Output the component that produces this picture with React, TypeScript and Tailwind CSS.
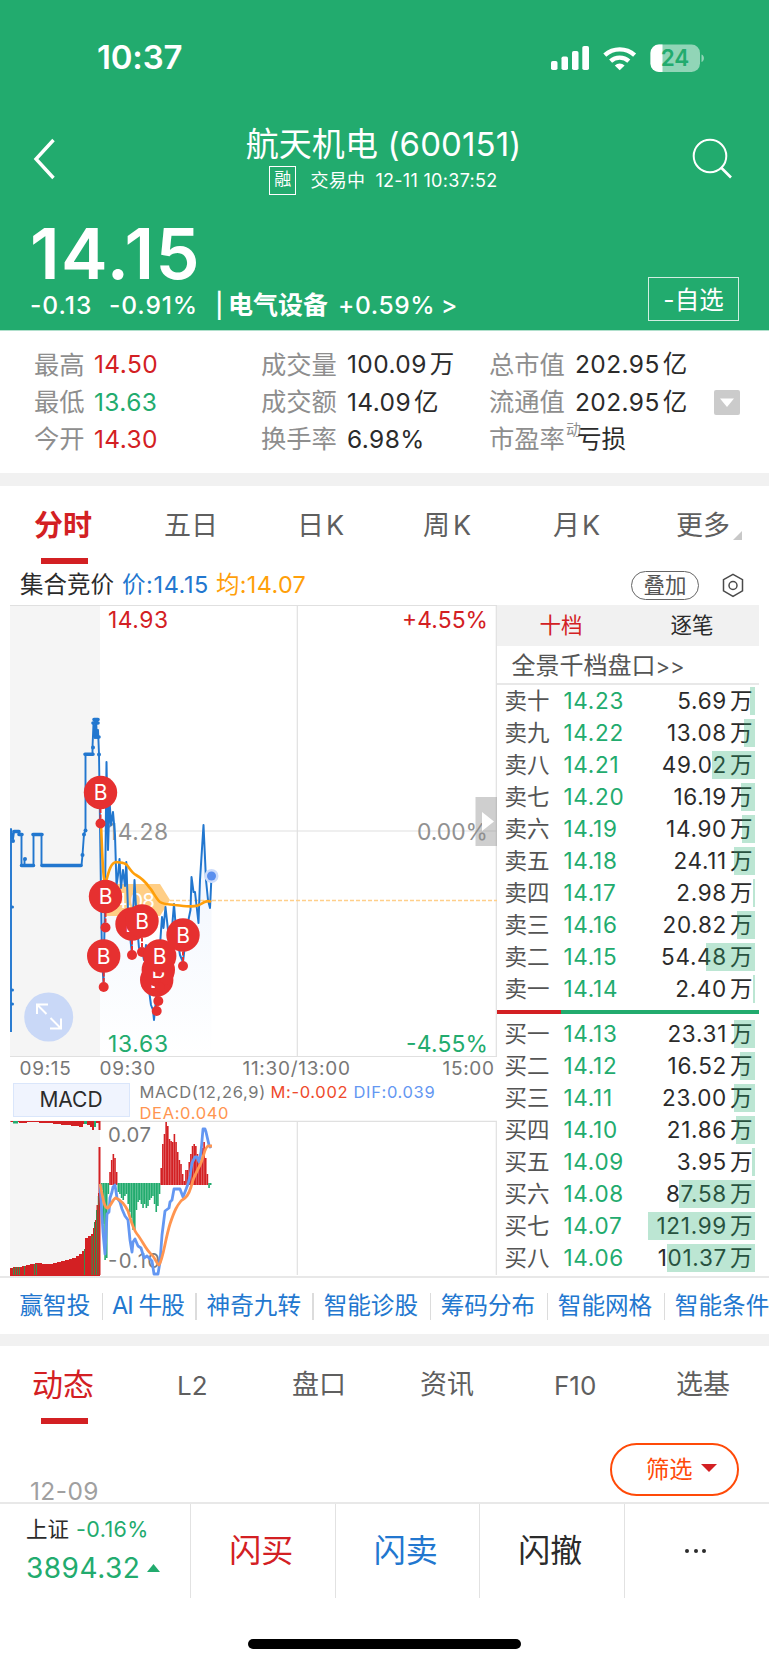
import React from 'react';
import clsx from 'clsx';

interface Level {
  label: string;
  price: string;
  volume: string;
  bar: number;
}

const asks: Level[] = [
  { label: '卖十', price: '14.23', volume: '5.69', bar: 5 },
  { label: '卖九', price: '14.22', volume: '13.08', bar: 11 },
  { label: '卖八', price: '14.21', volume: '49.02', bar: 43 },
  { label: '卖七', price: '14.20', volume: '16.19', bar: 14 },
  { label: '卖六', price: '14.19', volume: '14.90', bar: 13 },
  { label: '卖五', price: '14.18', volume: '24.11', bar: 21 },
  { label: '卖四', price: '14.17', volume: '2.98', bar: 2 },
  { label: '卖三', price: '14.16', volume: '20.82', bar: 18 },
  { label: '卖二', price: '14.15', volume: '54.48', bar: 49 },
  { label: '卖一', price: '14.14', volume: '2.40', bar: 2 },
];

const bids: Level[] = [
  { label: '买一', price: '14.13', volume: '23.31', bar: 21 },
  { label: '买二', price: '14.12', volume: '16.52', bar: 15 },
  { label: '买三', price: '14.11', volume: '23.00', bar: 21 },
  { label: '买四', price: '14.10', volume: '21.86', bar: 19 },
  { label: '买五', price: '14.09', volume: '3.95', bar: 3 },
  { label: '买六', price: '14.08', volume: '87.58', bar: 76 },
  { label: '买七', price: '14.07', volume: '121.99', bar: 107 },
  { label: '买八', price: '14.06', volume: '101.37', bar: 88 },
];

const auctionLine =
  'M11 1032V829L13 839L14 832L16 831L18 832L20 834H21.5V865.5H24.5V859V865.5H33.5V834H41.5V865.5H81.5L82.5 855L84 834L85.5 830V754H92.5V747L93.5 723L95 738L96 719L97 738L98 730L99 754L100 824';

const priceLine =
  'M100 824L102 960L103.5 982L105 900L106.5 762L108 850L109.5 800L111 825L113 812L115 835L116.5 885L118 875L119.5 859L121 888L123 870L125 886L126.3 862L128 910L130 935L131.5 950L134.5 880L137 925L139 948L142 950L144 960L146 945L149 990L151 1005L153 1010L154 1020L156 1000L158 980L160 945L162 917L163.5 928L165.5 907L168 930L171 940L174 904L176 930L180 955L183 962L185 945L188 922L190.5 910L191.5 877L193.5 892L195 892L198.5 923L200 880L203.5 825L206 880L208 900L210 908L211.5 876';

const averageLine =
  'M101 824C102 845 103 890 106 882C109 870 111 863 116 862C121 863 124 862 127 865C130 869 132 873 136 875C143 879 147 884 149 887C153 891 156 899 160 902C165 905 170 904 175 905C185 906 195 908 201 904C205 901 208 900 211 902';

const markers = [
  { x: 100.5, y: 792.5 },
  { x: 105.5, y: 896.5 },
  { x: 103.7, y: 956 },
  { x: 132, y: 924 },
  { x: 142, y: 921 },
  { x: 156.7, y: 980 },
  { x: 158.3, y: 970 },
  { x: 159.7, y: 956 },
  { x: 183, y: 935 },
];

// one histogram bar per minute, starting right at the open
const macdBars = [
  -6, -40, -76, -74, -10, 12, 24, 30, 26, 12,
  -8, -10, -14, -16, -12, -10, -20, -28, -34, -46,
  -46, -26, -18, -16, -20, -24, -20, -24, -22, -16,
  -14, -12, -20, -28, -22, -10, 16, 40, 50,
  62, 58, 45, 43, 42, 50, 42, 32, 24, 20,
  10, 3, 14, 14, 22, 30, 38, 40, 38, 30,
  26, 22, 36, 42, 26, 10, -4, -1,
];

const difLine =
  'M100 1184L103 1232L105 1254L106 1235L107 1214L109 1212L110 1198L112 1192L113 1187L115 1185L117 1198L120 1202L122 1209L125 1216L128 1220L130 1240L132 1252L133 1242L135 1239L138 1246L141 1248L144 1258L147 1256L152 1261L154 1274H158L160 1262L162 1235L165 1211L169 1208L170 1202L172 1200L174 1189L180 1189L183 1197L185 1192L188 1184L190 1176L192 1163L195 1157L197 1157L199 1162L201 1152L203 1129H205L206 1132L209 1145L211 1148';

const deaLine =
  'M100 1184C103 1197 104 1209 108 1208C111 1206 113 1198 116 1198C121 1200 125 1205 128 1211C132 1224 133 1229 137 1234C142 1240 146 1250 151 1254C155 1257 157 1265 159 1265C163 1260 165 1240 170 1224C175 1209 177 1206 181 1201C185 1198 188 1197 191 1187C194 1174 198 1170 201 1163C204 1155 205 1147 208 1146H212';

function StatusBar() {
  return (
    <div className="flex h-[115px] items-center pl-[97px]">
      <span className="w-[454px] pt-px text-[33px] font-semibold tracking-[-0.2px]">10:37</span>
      <svg width="156" height="30" viewBox="551 42 156 30">
        <g fill="#fff">
          <rect x="551" y="60" width="6.5" height="9" rx="1.8" />
          <rect x="561.5" y="55.5" width="6.5" height="13.5" rx="1.8" />
          <rect x="572" y="50" width="6.5" height="19" rx="1.8" />
          <rect x="582.3" y="45" width="6.7" height="24" rx="1.8" />
          <path d="M619.7 69.3l-4.9-4.9a7.2 7.2 0 0 1 9.8 0z" />
        </g>
        <g fill="none" stroke="#fff" strokeWidth="4.4">
          <path d="M604.8 54.2a22 22 0 0 1 29.8 0" />
          <path d="M610.6 60.2a13.4 13.4 0 0 1 18.2 0" />
        </g>
        <rect x="650.5" y="43.5" width="49.5" height="27.5" rx="8.5" fill="#fff" fillOpacity="0.5" />
        <path d="M662.5 43.5H659a8.5 8.5 0 0 0-8.5 8.5v10.5a8.5 8.5 0 0 0 8.5 8.5h3.5z" fill="#fff" />
        <path d="M701.5 53.5c3.2 1 3.2 6.5 0 7.5z" fill="#fff" fillOpacity="0.5" />
        <text x="675" y="65" textAnchor="middle" fontSize="22.5" fontWeight="600" fill="#22ab6e">24</text>
      </svg>
    </div>
  );
}

function Header() {
  return (
    <header className="h-[331px] border-b border-[#b0e0cc] bg-[#22ab6e] text-white">
      <StatusBar />
      <div className="flex h-[89px] pl-[33px]">
        <svg className="mt-[23px]" width="24" height="42" viewBox="0 0 24 42" fill="none" stroke="#fff" strokeWidth="3.4">
          <path d="M20.5 2L3 21l17.5 19" />
        </svg>
        <div className="flex w-[635px] flex-col items-center pt-[9px] pr-px pl-[19px]">
          <h1 className="text-[33px] leading-[40px] tracking-[0.1px] whitespace-pre">航天机电 (600151)</h1>
          <div className="mt-px flex h-[30px] items-center text-[18px] tracking-[0.3px]">
            <span className="mr-[14px] flex h-[29px] w-[27px] items-center justify-center border border-white text-[17px]">
              融
            </span>
            <span className="mr-[10px]">交易中</span>
            <span>12-11 10:37:52</span>
          </div>
        </div>
        <svg className="mt-[23px]" width="42" height="42" viewBox="0 0 42 42" fill="none" stroke="#fff" strokeWidth="2">
          <circle cx="18" cy="18" r="16.3" />
          <path d="M29 29.5l10 10" strokeWidth="2.6" />
        </svg>
      </div>
      <div className="flex justify-between pr-[30px] pl-[30px]">
        <div>
          <div className="mt-[13px] h-[73px] text-[70px] leading-[73px] font-semibold tracking-[1.5px]">14.15</div>
          <div className="flex h-[30px] items-center text-[24.5px] leading-[30px] font-medium">
            <span className="w-[79px] tracking-[1px]">-0.13</span>
            <span className="w-[106px] tracking-[0.9px]">-0.91%</span>
            <span className="w-[13px]">|</span>
            <span className="w-[110px] text-[25px] font-bold">电气设备</span>
            <span className="w-[103px] tracking-[0.6px]">+0.59%</span>
            <span>&gt;</span>
          </div>
        </div>
        <button className="mt-[73px] flex h-[44px] w-[91px] items-center justify-center border border-white/80 pt-[2px] text-[24.5px]">
          -自选
        </button>
      </div>
    </header>
  );
}

interface StatProps {
  label: string;
  value: string;
  unit?: string;
  wide?: boolean;
  color?: string;
}

function Stat({ label, value, unit, wide, color = 'text-[#2b2b2b]' }: StatProps) {
  return (
    <div className="flex h-[37.3px] items-center text-[25.3px]">
      <span className={clsx('text-[#8e8e8e]', wide ? 'w-[86px]' : 'w-[60px]')}>{label}</span>
      <span className={clsx('text-[24.5px] tracking-[0.4px]', color)}>{value}</span>
      {unit && <span className="ml-[3px] text-[24.5px] text-[#2b2b2b]">{unit}</span>}
    </div>
  );
}

function Stats() {
  return (
    <section className="flex h-[142px] pt-[15px] pl-[34px]">
      <div className="w-[227px]">
        <Stat label="最高" value="14.50" color="text-[#d32023]" />
        <Stat label="最低" value="13.63" color="text-[#22ab6e]" />
        <Stat label="今开" value="14.30" color="text-[#d32023]" />
      </div>
      <div className="w-[228px]">
        <Stat label="成交量" value="100.09" unit="万" wide />
        <Stat label="成交额" value="14.09" unit="亿" wide />
        <Stat label="换手率" value="6.98%" wide />
      </div>
      <div className="w-[225px]">
        <Stat label="总市值" value="202.95" unit="亿" wide />
        <Stat label="流通值" value="202.95" unit="亿" wide />
        <div className="flex h-[37.3px] items-center text-[25.3px]">
          <span className="w-[77px] text-[#8e8e8e]">市盈率</span>
          <span className="mb-[18px] w-[11px] text-[15px] whitespace-nowrap text-[#8e8e8e]">动</span>
          <span className="text-[24.5px] text-[#2b2b2b]">亏损</span>
        </div>
      </div>
      <div className="mt-[44px] flex h-[25px] w-[26px] items-center justify-center rounded-[2px] bg-[#cbcbcb]">
        <svg width="14" height="9" viewBox="0 0 14 9">
          <path d="M0 .5h14L7 9z" fill="#fff" />
        </svg>
      </div>
    </section>
  );
}

function PeriodTabs() {
  return (
    <nav className="flex h-[79px] pl-[34px] text-[27px] leading-[44px] text-[#5f5f5f]">
      <div className="flex h-full w-[130px] flex-col pt-[18px]">
        <span className="h-[44px] text-[29px] font-bold text-[#d32023]">分时</span>
        <span className="mt-[10px] ml-[7px] h-[6px] w-[47px] bg-[#d32023]" />
      </div>
      <div className="flex pt-[18px]">
        <span className="w-[133px]">五日</span>
        <span className="flex w-[126px] gap-[2px]">日<span>K</span></span>
        <span className="flex w-[130px] gap-[3px]">周<span>K</span></span>
        <span className="flex w-[123px] gap-[2px]">月<span>K</span></span>
        <span>更多</span>
        <svg className="mt-[27px] ml-[3px]" width="9" height="9" viewBox="0 0 9 9">
          <path d="M9 0v9H0z" fill="#c8c8c8" />
        </svg>
      </div>
    </nav>
  );
}

function QuoteLine() {
  return (
    <div className="flex h-[40px] items-center pl-[20px] text-[23.5px]">
      <span className="w-[102px] text-[#2b2b2b]">集合竞价</span>
      <span className="w-[94px] tracking-[0.6px] text-[#2277cf]">价:14.15</span>
      <span className="w-[415px] tracking-[0.3px] text-[#ff9f0a]">均:14.07</span>
      <span className="flex h-[29px] w-[68px] items-center justify-center rounded-full border border-[#666] text-[21.5px] text-[#555]">
        叠加
      </span>
      <svg className="ml-[23px]" width="22" height="25" viewBox="0 0 22 25" fill="none" stroke="#4a4a4a" strokeWidth="1.5">
        <path d="M11 1.3l9.5 5.4v11.2L11 23.5l-9.5-5.6V6.700z" />
        <circle cx="11" cy="12.5" r="4" />
      </svg>
    </div>
  );
}

function PriceChart() {
  return (
    <svg className="block" width="487" height="453" viewBox="10 605 487 453">
      <defs>
        <linearGradient id="area" x1="0" y1="0" x2="0" y2="1">
          <stop offset="0" stopColor="#5b95ee" stopOpacity="0.12" />
          <stop offset="1" stopColor="#5b95ee" stopOpacity="0" />
        </linearGradient>
      </defs>
      <rect x="10" y="605" width="90" height="452" fill="#f5f5f5" />
      <g stroke="#e0e0e0" strokeWidth="1.2">
        <path d="M10 605.5H497M10 1056.5H497" />
        <path d="M297.3 605V1057M496.3 605V1057M100 831H497" />
      </g>
      <path d={priceLine + 'V1057H100Z'} fill="url(#area)" />

      <g fontSize="22.8">
        <text x="108" y="628.3" fill="#d32023" textLength="60">14.93</text>
        <text x="108" y="840" fill="#919191" textLength="60">14.28</text>
        <text x="108" y="1051.5" fill="#22ab6e" textLength="60">13.63</text>
        <text x="402" y="628.3" fill="#d32023" textLength="86">+4.55%</text>
        <text x="417" y="840" fill="#919191" textLength="71">0.00%</text>
        <text x="406" y="1051.5" fill="#22ab6e" textLength="82">-4.55%</text>
      </g>

      <path d="M104 884h56l10 16-10 16h-56z" fill="#ffce85" />
      <text x="107" y="908" fontSize="20.5" fill="#fff" textLength="48">14.08</text>
      <path d="M170 900.5H497" stroke="#ffcf8a" strokeWidth="1.3" strokeDasharray="4 2" />

      <g fill="none" strokeLinejoin="round">
        <path d={auctionLine} stroke="#2277cf" strokeWidth="1.9" />
        <path
          d="M14 831.5h5M19 834.5h3M33 834.5h9M21.5 865.5h12M42 865.5h39M85 754.3h8M94 719.5h4M93 723h5M95 737h4"
          stroke="#2277cf"
          strokeWidth="3.6"
          strokeLinecap="round"
        />
        <path d={priceLine} stroke="#2277cf" strokeWidth="2" />
        <path d={averageLine} stroke="#ff9f0a" strokeWidth="2.6" />
      </g>
      <g fill="#2277cf">
        <circle cx="25" cy="859" r="2" />
        <circle cx="82.5" cy="855" r="2" />
        <circle cx="84" cy="834.5" r="2" />
        <circle cx="85.5" cy="830.5" r="2" />
        <circle cx="93" cy="747.5" r="2" />
        <circle cx="99" cy="754.5" r="2" />
        <circle cx="13" cy="841" r="2" />
        <circle cx="12.5" cy="907" r="1.5" />
        <circle cx="12.5" cy="990" r="1.5" />
        <circle cx="12.5" cy="1004" r="1.5" />
      </g>

      <circle cx="211.5" cy="876" r="7" fill="#cddcfa" />
      <circle cx="211.5" cy="876" r="4.5" fill="#5b8fee" />

      {markers.map((m) => (
        <g key={`${m.x}-${m.y}`}>
          <path d={`M${m.x} ${m.y}v31`} stroke="#e63030" strokeWidth="2" strokeDasharray="4 1.5" />
          <circle cx={m.x} cy={m.y + 31} r="5" fill="#e63030" />
          <circle cx={m.x} cy={m.y} r="16.7" fill="#e63030" />
          <text x={m.x} y={m.y + 7.5} textAnchor="middle" fontSize="21" fill="#fff">
            B
          </text>
        </g>
      ))}

      <circle cx="48.7" cy="1017" r="24.5" fill="#c9d8f7" />
      <g fill="none" stroke="#fff" strokeWidth="2">
        <path d="M37 1014v-9.5h11M37 1004.5l9.5 9.5" />
        <path d="M50 1028.5h11v-10M50.5 1018l10.5 10.5" />
      </g>

      <rect x="475.5" y="797" width="21.5" height="49" fill="#8c8c8c" fillOpacity="0.42" />
      <path d="M482 812l12 9.5-12 9.5z" fill="#fff" />
    </svg>
  );
}

function MacdChart() {
  return (
    <svg className="block" width="487" height="156" viewBox="10 1120 487 156">
      <rect x="10" y="1121" width="90" height="154" fill="#f5f5f5" />
      <path d="M10 1121.3H497M297.3 1121V1275M496.3 1121V1275" stroke="#e0e0e0" strokeWidth="1.2" />
      <path
        d="M10 1121h90.500v9h-2v-7h-4.500v7h-2v-3h-2v-2h-3v-1h-4v3h-4v-1h-8v-1h-10v-1h-8v-1h-14v-1h-12v1h-8v-1h-8z"
        fill="#d32023"
      />
      <path d="M13 1121h5v2.500h-5zM84 1121h3v3h-3zM94 1121h2v6h-2z" fill="#22ab6e" />
      <path
        d="M10 1268h3v-1h9v-1h4v-1h4v-1h5v-1h7v1h11v-1h4v-1h4v-1h4v-1h4v-1h3v-1h4v-2h3v-2h3v-3h3v-13h3v-2h3v-2h2v-6h2v-8h1.500v-15h1.500v-12h2v92h-90z"
        fill="#d32023"
      />
      <path
        d="M13 1268h1v7h-1zM15 1267h1v8h-1zM17 1267h1v8h-1zM19 1267h1v8h-1zM24 1266h1v9h-1zM34 1264h1v11h-1zM36 1264h1v11h-1zM84 1249h1v26h-1zM91.5 1236h1.2v39h-1.200zM94 1222h1v53h-1zM96 1210h1v65h-1zM97.8 1196h1v79h-1z"
        fill="#3f8a4c"
      />
      <rect x="98.5" y="1147" width="2" height="128" fill="#d32023" />

      {macdBars.map((v, i) => (
        <rect
          key={i}
          x={101 + i * 1.65}
          y={v > 0 ? 1184 - v : 1183}
          width="1.6"
          height={Math.abs(v) + 1}
          fill={v > 0 ? '#d32023' : '#22ab6e'}
        />
      ))}
      <g fontSize="20.3" fill="#7a7a7a">
        <text x="108" y="1141.5" textLength="43">0.07</text>
        <text x="108" y="1268" textLength="52">-0.10</text>
      </g>
      <g fill="none" strokeWidth="2.8" strokeLinejoin="round">
        <path d={difLine} stroke="#6497f2" />
        <path d={deaLine} stroke="#ff9550" />
      </g>
    </svg>
  );
}

function ChartColumn() {
  return (
    <div className="w-[487px]">
      <PriceChart />
      <div className="flex h-[22px] items-center pl-[10px] text-[19px] tracking-[0.7px] text-[#777]">
        <span className="w-[80px]">09:15</span>
        <span className="w-[143px]">09:30</span>
        <span className="w-[200px]">11:30/13:00</span>
        <span>15:00</span>
      </div>
      <div className="flex h-[40px] pt-[3px] pl-[3px]">
        <div className="flex h-[34px] w-[117px] items-center justify-center border border-[#dae6fb] bg-[#f0f4fe] text-[21px] text-[#2b2b2b]">
          MACD
        </div>
        <div className="-mt-px flex h-[40px] flex-1 flex-wrap content-start pl-[10px] text-[16.5px] leading-[20.5px] tracking-[0.65px]">
          <span className="w-[131px] text-[#777]">MACD(12,26,9)</span>
          <span className="w-[83px] text-[#ee4a2c]">M:-0.002</span>
          <span className="w-[100px] text-[#6497f2]">DIF:0.039</span>
          <span className="text-[#ff9550]">DEA:0.040</span>
        </div>
      </div>
      <MacdChart />
    </div>
  );
}

function LevelRow({ level }: { level: Level }) {
  return (
    <div className="relative flex h-[32px] items-center pl-[8px]">
      <span className="w-[59px] text-[22.5px] text-[#555]">{level.label}</span>
      <span className="text-[22.5px] tracking-[0.7px] text-[#22ab6e]">{level.price}</span>
      <span className="ml-auto text-[22.5px] tracking-[0.7px] text-[#2b2b2b]">{level.volume}</span>
      <span className="mr-[6px] ml-[3px] text-[22.5px] text-[#2b2b2b]">万</span>
      <span
        className="absolute top-[2px] right-[4px] h-[28px] bg-[#22ab6e]/30"
        style={{ width: level.bar }}
      />
    </div>
  );
}

function OrderBook() {
  return (
    <div className="w-[262px]">
      <div className="flex h-[41px] items-center bg-[#f1f1f1] pl-[43px] text-[21.5px]">
        <span className="w-[131px] text-[#d32023]">十档</span>
        <span className="text-[#2b2b2b]">逐笔</span>
      </div>
      <div className="flex h-[39px] items-center border-b-2 border-[#e8e8e8] pt-[3px] pl-[15px] text-[24px] text-[#555]">
        全景千档盘口
        <span className="text-[22px]">&gt;&gt;</span>
      </div>
      {asks.map((level) => (
        <LevelRow key={level.label} level={level} />
      ))}
      <div className="mt-[5px] mb-[4px] flex h-[4px]">
        <div className="w-[64px] bg-[#d32023]" />
        <div className="flex-1 bg-[#22ab6e]" />
      </div>
      {bids.map((level) => (
        <LevelRow key={level.label} level={level} />
      ))}
    </div>
  );
}

const tools = ['赢智投', 'AI 牛股', '神奇九转', '智能诊股', '筹码分布', '智能网格', '智能条件单'];

function ToolLinks() {
  return (
    <div className="flex h-[58px] items-center overflow-hidden border-t-2 border-[#e8e8e8] pl-[19.5px] text-[23.6px] text-[#2277cf]">
      {tools.map((tool, i) => (
        <React.Fragment key={tool}>
          {i > 0 && <span className="mr-[9.7px] ml-[11.5px] h-[27px] w-[1.5px] shrink-0 bg-[#dcdcdc]" />}
          <span className={clsx('shrink-0 whitespace-nowrap', i === 1 && '-ml-px tracking-[-0.9px]')}>{tool}</span>
        </React.Fragment>
      ))}
    </div>
  );
}

function NewsTabs() {
  return (
    <nav className="flex h-[79px] items-center pl-[32px] text-[27px] text-[#5f5f5f]">
      <div className="flex h-full w-[145px] flex-col pt-[17px]">
        <span className="h-[44px] text-[31px] leading-[44px] text-[#d32023]">动态</span>
        <span className="mt-[11px] ml-[9px] h-[6px] w-[47px] bg-[#d32023]" />
      </div>
      <span className="w-[115px] text-[26px]">L2</span>
      <span className="w-[128px]">盘口</span>
      <span className="w-[134px]">资讯</span>
      <span className="w-[122px] text-[26px]">F10</span>
      <span>选基</span>
    </nav>
  );
}

function BottomBar() {
  return (
    <footer className="flex h-[96px] border-t-2 border-[#e8e8e8] bg-white text-[32px]">
      <div className="flex w-[191px] flex-col border-r border-[#e2e2e2] pt-[10px] pl-[26px]">
        <div className="flex h-[30px] items-center text-[21.5px]">
          <span className="w-[50px] text-[#2b2b2b]">上证</span>
          <span className="tracking-[0.4px] text-[#22ab6e]">-0.16%</span>
        </div>
        <div className="mt-[5px] flex h-[38px] items-center text-[28px] tracking-[0.5px] text-[#22ab6e]">
          3894.32
          <svg className="ml-[7px]" width="13" height="8" viewBox="0 0 13 8">
            <path d="M6.5 0L13 8H0z" fill="#22ab6e" />
          </svg>
        </div>
      </div>
      <button className="w-[144.5px] border-r border-[#e2e2e2] pr-[3px] text-[#d32023]">闪买</button>
      <button className="w-[144.5px] border-r border-[#e2e2e2] pr-[3px] text-[#2277cf]">闪卖</button>
      <button className="w-[144.5px] border-r border-[#e2e2e2] pr-[3px] text-[#2b2b2b]">闪撤</button>
      <div className="flex flex-1 items-center justify-center gap-[4.7px] pr-[2px]">
        <span className="h-[4px] w-[4px] rounded-full bg-[#2b2b2b]" />
        <span className="h-[4px] w-[4px] rounded-full bg-[#2b2b2b]" />
        <span className="h-[4px] w-[4px] rounded-full bg-[#2b2b2b]" />
      </div>
    </footer>
  );
}

export default function App() {
  return (
    <div className="h-[1665px] w-[769px] overflow-hidden bg-white font-['Inter','Noto_Sans_CJK_SC',sans-serif]">
      <Header />
      <Stats />
      <div className="h-[13px] bg-[#f1f1f1]" />
      <PeriodTabs />
      <QuoteLine />
      <main className="flex h-[671px] pl-[9.5px]">
        <ChartColumn />
        <OrderBook />
      </main>
      <ToolLinks />
      <div className="h-[12px] bg-[#f1f1f1]" />
      <NewsTabs />
      <div className="flex h-[77px] justify-between pr-[30px] pl-[30px]">
        <span className="mt-[51px] h-[30px] text-[24.5px] leading-[30px] tracking-[0.4px] text-[#a0a0a0]">12-09</span>
        <button className="mt-[18px] flex h-[53px] w-[129px] items-center rounded-full border-2 border-[#ff4a08] pt-[2px] pl-[34px] text-[23.3px] text-[#ff4a08]">
          筛选
          <svg className="mb-[5px] ml-[8px]" width="16" height="8" viewBox="0 0 16 8">
            <path d="M0 0h16L8 8z" fill="#d32023" />
          </svg>
        </button>
      </div>
      <BottomBar />
      <div className="mx-auto mt-[41px] h-[10px] w-[273px] rounded-full bg-black" />
    </div>
  );
}
